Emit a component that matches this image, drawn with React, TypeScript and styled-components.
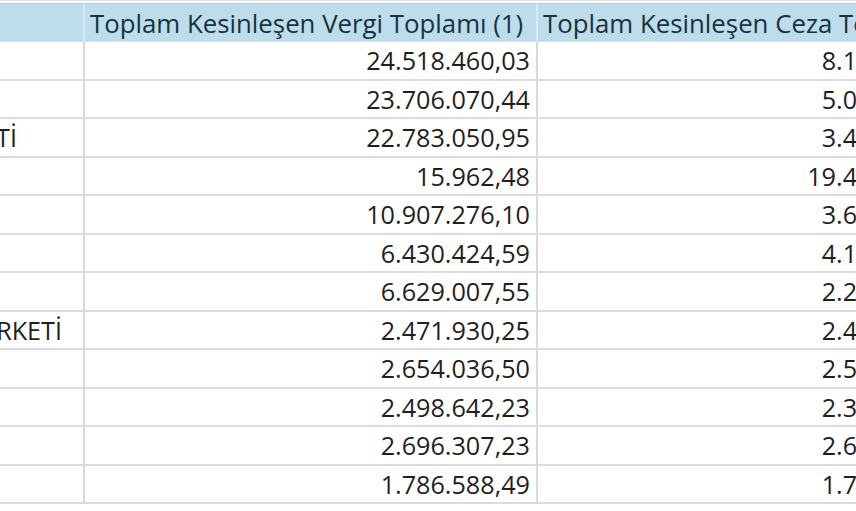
import React from "react";
import styled, { createGlobalStyle } from "styled-components";

const GlobalStyle = createGlobalStyle`
  html, body {
    margin: 0;
    padding: 0;
    background: #ffffff;
    overflow: hidden;
  }
  body {
    width: 856px;
    height: 511px;
    font-family: "Open Sans", "Noto Sans", sans-serif;
  }
`;

const Viewport = styled.div`
  width: 856px;
  height: 511px;
  overflow: hidden;
  padding-top: 2px;
  box-sizing: border-box;
  border-top: 1px solid #e4e4e4;
`;

const Sheet = styled.div`
  display: grid;
  grid-template-columns: 85px 453px 443px;
  grid-auto-rows: 38.5px;
  grid-template-rows: 39px;
  width: max-content;
`;

const HeaderCell = styled.div`
  background: #bddded;
  border-top: 1px solid #b3cfdc;
  border-bottom: 1px solid #d2e4ec;
  border-right: 2px solid #d9ebf3;
  box-sizing: border-box;
  display: flex;
  align-items: center;
  padding: 0 5px;
  font-size: 25.8px;
  color: #18323d;
  white-space: nowrap;
  overflow: hidden;
`;

const Cell = styled.div<{ $trail?: number }>`
  box-sizing: border-box;
  border-bottom: 2px solid #dcdcdc;
  border-right: 2px solid #d9d9d9;
  display: flex;
  align-items: center;
  justify-content: flex-end;
  padding-right: ${(p) => (p.$trail !== undefined ? p.$trail : 6)}px;
  font-size: 25.2px;
  color: #1f1f1f;
  white-space: nowrap;
  overflow: hidden;
`;

type Row = { name?: string; trail?: number; tax: string; fine: string };

const rows: Row[] = [
  { tax: "24.518.460,03", fine: "8.162.425,11" },
  { tax: "23.706.070,44", fine: "5.038.917,62" },
  { name: "LİMİTED ŞTİ", trail: 66, tax: "22.783.050,95", fine: "3.417.457,64" },
  { tax: "15.962,48", fine: "19.471.530,20" },
  { tax: "10.907.276,10", fine: "3.636.158,70" },
  { tax: "6.430.424,59", fine: "4.125.664,90" },
  { tax: "6.629.007,55", fine: "2.243.702,26" },
  { name: "ŞİRKETİ", trail: 21, tax: "2.471.930,25", fine: "2.415.579,08" },
  { tax: "2.654.036,50", fine: "2.508.812,48" },
  { tax: "2.498.642,23", fine: "2.377.952,67" },
  { tax: "2.696.307,23", fine: "2.616.309,03" },
  { tax: "1.786.588,49", fine: "1.735.240,18" },
];

const App = () => {
  return (
    <Viewport>
      <GlobalStyle />
      <Sheet>
        <HeaderCell />
        <HeaderCell>Toplam Kesinleşen Vergi Toplamı (1)</HeaderCell>
        <HeaderCell>Toplam Kesinleşen Ceza Toplamı (2)</HeaderCell>
        {rows.map((r, i) => (
          <React.Fragment key={i}>
            <Cell $trail={r.trail}>{r.name ?? ""}</Cell>
            <Cell>{r.tax}</Cell>
            <Cell $trail={8}>{r.fine}</Cell>
          </React.Fragment>
        ))}
      </Sheet>
    </Viewport>
  );
};

export default App;
